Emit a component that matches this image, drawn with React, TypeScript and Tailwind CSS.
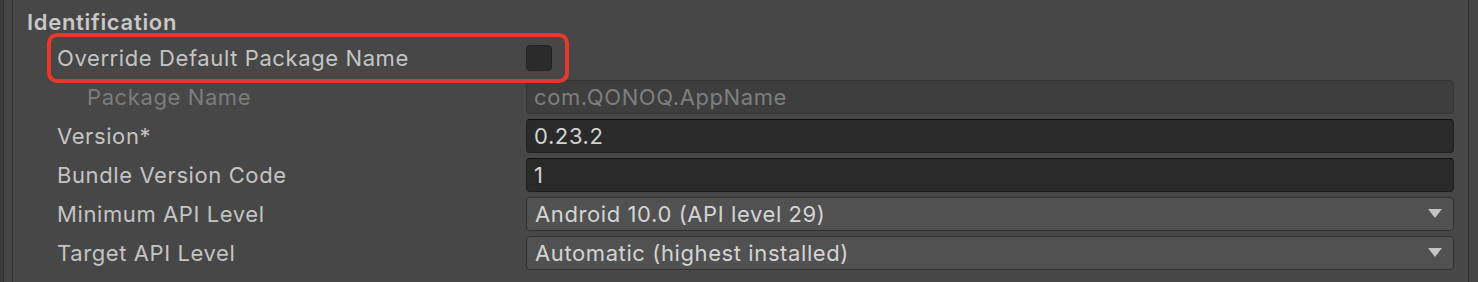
import React from 'react';

const font = { fontFamily: 'Inter, "Noto Sans", sans-serif' };

const Arrow = () => (
  <svg width="14" height="9" viewBox="0 0 14 9" className="shrink-0">
    <path d="M0 0 H14 L7 9 Z" fill="#c4c4c4" />
  </svg>
);

interface RowProps {
  label: string;
  dim?: boolean;
  indent?: boolean;
  children: React.ReactNode;
}

const Row: React.FC<RowProps> = ({ label, dim, indent, children }) => (
  <div className="flex items-center h-[39px] pl-[44px] pr-[14px]">
    <div
      className={`w-[469px] shrink-0 text-[22px] tracking-[0.6px] leading-none ${indent ? 'pl-[30px]' : ''} ${
        dim ? 'text-[#7c7c7c]' : 'text-[#c4c4c4]'
      }`}
    >
      {label}
    </div>
    <div className="flex-1">{children}</div>
  </div>
);

export default function App() {
  return (
    <div className="w-[1478px] h-[282px] bg-[#474747] flex overflow-hidden" style={font}>
      {/* outer gutter */}
      <div className="w-[3px] bg-[#3e3e3e]" />
      <div className="w-[9px] border-l border-[#2f2f2f] bg-[#464646]" />
      <div className="flex-1 border-l border-r border-[#303030] pt-[2px]">
        {/* Section header */}
        <div className="h-[36px] flex items-center pl-[14px] pt-[4px] text-[22px] tracking-[0.7px] font-semibold text-[#c8c8c8] leading-none">
          Identification
        </div>

        {/* Override toggle */}
        <div className="relative flex items-center h-[39px] pl-[44px] pr-[14px]">
          <div className="w-[469px] shrink-0 text-[22px] tracking-[0.6px] leading-none text-[#c4c4c4]">
            Override Default Package Name
          </div>
          <div className="w-[26px] h-[26px] rounded-[4px] bg-[#2b2b2b] border border-[#232323]" />
          <div className="absolute left-[34px] top-[-5px] w-[522px] h-[50px] rounded-[10px] border-[4px] border-[#e8382c] pointer-events-none" />
        </div>

        <Row label="Package Name" dim indent>
          <div className="h-[34px] rounded-[4px] bg-[#3e3e3e] border border-[#353535] flex items-center px-[7px] text-[22px] tracking-[0.6px] text-[#7e7e7e] leading-none">
            com.QONOQ.AppName
          </div>
        </Row>

        <Row label="Version*">
          <div className="h-[34px] rounded-[4px] bg-[#2a2a2a] border border-[#202020] border-t-[#0f0f0f] flex items-center px-[7px] text-[22px] tracking-[0.6px] text-[#d2d2d2] leading-none">
            0.23.2
          </div>
        </Row>

        <Row label="Bundle Version Code">
          <div className="h-[34px] rounded-[4px] bg-[#2a2a2a] border border-[#202020] border-t-[#0f0f0f] flex items-center px-[7px] text-[22px] tracking-[0.6px] text-[#d2d2d2] leading-none">
            1
          </div>
        </Row>

        <Row label="Minimum API Level">
          <div className="h-[34px] rounded-[4px] bg-[#515151] border border-[#303030] flex items-center justify-between pl-[8px] pr-[11px] text-[22px] tracking-[0.6px] text-[#d4d4d4] leading-none">
            <span>Android 10.0 (API level 29)</span>
            <Arrow />
          </div>
        </Row>

        <Row label="Target API Level">
          <div className="h-[34px] rounded-[4px] bg-[#515151] border border-[#303030] flex items-center justify-between pl-[8px] pr-[11px] text-[22px] tracking-[0.6px] text-[#d4d4d4] leading-none">
            <span>Automatic (highest installed)</span>
            <Arrow />
          </div>
        </Row>
      </div>
      <div className="w-[9px] bg-[#454545]" />
    </div>
  );
}
